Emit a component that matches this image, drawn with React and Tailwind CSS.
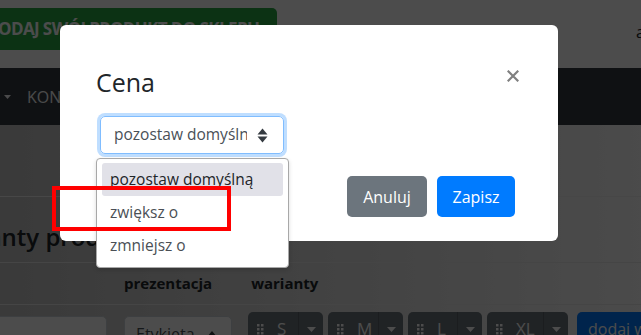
import React from "react";

function Grip() {
  return (
    <svg width="7" height="11" viewBox="0 0 7 11" className="shrink-0">
      <rect x="0" y="0" width="2.5" height="2.5" fill="#ffffff" />
      <rect x="4" y="0" width="2.5" height="2.5" fill="#ffffff" />
      <rect x="0" y="4" width="2.5" height="2.5" fill="#ffffff" />
      <rect x="4" y="4" width="2.5" height="2.5" fill="#ffffff" />
      <rect x="0" y="8" width="2.5" height="2.5" fill="#ffffff" />
      <rect x="4" y="8" width="2.5" height="2.5" fill="#ffffff" />
    </svg>
  );
}

function SizeGroup({ label, w }) {
  return (
    <div className="flex h-[34px] shrink-0 rounded-[5px] bg-[#6c757d] text-white" style={{ width: w }}>
      <div className="flex flex-1 items-center gap-[13px] pl-[9px] text-[17px]">
        <Grip />
        <span>{label}</span>
      </div>
      <div className="flex w-[25px] items-center justify-center border-l border-[#5a6268]">
        <svg width="9" height="5" viewBox="0 0 9 5"><path d="M0 0h9L4.5 5z" fill="#ffffff" /></svg>
      </div>
    </div>
  );
}

export default function App() {
  return (
    <div className="relative h-[335px] w-[641px] overflow-hidden bg-white font-['Open_Sans',sans-serif]">
      {/* page underneath */}
      <div className="flex flex-col">
        <header className="flex h-[68px] shrink-0 items-start justify-between bg-white pt-[8px]">
          <div className="-ml-[26px] flex h-[42px] w-[303px] shrink-0 items-center overflow-hidden whitespace-nowrap rounded-[5px] bg-[#28a745] pl-[12px] text-[17px] font-bold tracking-[-0.6px] text-white">
            DODAJ SWÓJ PRODUKT DO SKLEPU
          </div>
          <span className="mr-[-4px] mt-[12px] text-[16px] text-[#212529]">a</span>
        </header>
        <nav className="flex h-[57px] shrink-0 items-center gap-[16px] bg-[#343a40] pl-[4px] text-[16px] text-[#f8f9fa]">
          <svg width="7" height="4" viewBox="0 0 7 4"><path d="M0 0h7L3.5 4z" fill="#f8f9fa" /></svg>
          <span className="mt-[1px]">KONTAKT</span>
        </nav>
        <main className="flex h-[210px] shrink-0 flex-col bg-linear-to-r from-[#c2c2c2] to-[#fafafa]">
          <div className="h-[72px] shrink-0 border-b border-[#eeeeee]" />
          <div className="flex h-[66px] shrink-0 items-start border-b border-[#e6e6e6] pt-[25px]">
            <h2 className="-ml-[66px] shrink-0 whitespace-nowrap text-[24px] font-semibold leading-[29px] text-[#212529]">
              Warianty produktu
            </h2>
          </div>
          <div className="flex h-[42px] shrink-0 items-center border-b border-[#e6e6e6] text-[15px] font-bold text-[#212529]">
            <span className="ml-[124px] shrink-0">prezentacja</span>
            <span className="ml-[39px] shrink-0">warianty</span>
          </div>
          <div className="flex shrink-0 items-start pt-[7px]">
            <div className="-ml-[20px] mt-[4px] h-[36px] w-[127px] shrink-0 rounded-[5px] border border-[#ced4da] bg-white" />
            <div className="ml-[17px] mt-[4px] flex h-[36px] w-[108px] shrink-0 items-center justify-between rounded-[5px] border border-[#ced4da] bg-white pl-[11px] pr-[14px] text-[16px] text-[#495057]">
              <span>Etykieta</span>
              <svg width="10" height="6" viewBox="0 0 10 6"><path d="M0 6h10L5 0z" fill="#343a40" /></svg>
            </div>
            <div className="ml-[16px] flex shrink-0 gap-[5px]">
              <SizeGroup label="S" w={75} />
              <SizeGroup label="M" w={75} />
              <SizeGroup label="L" w={74} />
              <SizeGroup label="XL" w={81} />
            </div>
            <div className="ml-[9px] flex h-[34px] shrink-0 items-center whitespace-nowrap rounded-[5px] bg-[#007bff] pl-[11px] pr-[12px] text-[16px] text-white">
              dodaj wariant
            </div>
          </div>
        </main>
      </div>

      {/* modal backdrop + dialog */}
      <div className="absolute inset-0 bg-black/70 pl-[60px] pt-[25px]">
        <div className="relative h-[216px] w-[498px] rounded-[6px] bg-white px-[36px] pt-[42px]">
          <div className="flex h-[30px] items-start justify-between">
            <h5 className="text-[25px] leading-[30px] text-[#212529]">Cena</h5>
            <svg width="12" height="12" viewBox="0 0 12 12" className="mr-[3px] mt-[3px]">
              <path d="M1.5 1.5l9 9M10.5 1.5l-9 9" stroke="#808080" strokeWidth="2.2" strokeLinecap="square" />
            </svg>
          </div>
          <div className="mt-[19px] flex items-start justify-between">
            <div className="ml-[4px] flex h-[38px] w-[184px] items-center rounded-[5px] border border-[#80bdff] pl-[13px] pr-[15px] shadow-[0_0_0_3px_rgba(0,123,255,0.25)]">
              <span className="w-[133px] overflow-hidden whitespace-nowrap text-[15.5px] text-[#495057]">pozostaw domyślną</span>
              <svg width="11" height="15" viewBox="0 0 11 15" className="ml-auto">
                <path d="M5.5 0.5L10.5 6.5H0.5z" fill="#343a40" />
                <path d="M5.5 14.5L10.5 8.5H0.5z" fill="#343a40" />
              </svg>
            </div>
            <div className="mr-[7px] mt-[60px] flex gap-[10px]">
              <button className="h-[41px] w-[80px] rounded-[5px] bg-[#6c757d] text-[16px] text-white">Anuluj</button>
              <button className="h-[41px] w-[78px] rounded-[5px] bg-[#007bff] text-[16px] text-white">Zapisz</button>
            </div>
          </div>

          {/* open native select list */}
          <div className="absolute left-[36px] top-[133px] flex h-[110px] w-[193px] flex-col rounded-[4px] border border-[#a8a8a8] bg-white px-[5px] pt-[4px] text-[15.5px] shadow-[0_2px_4px_rgba(0,0,0,0.15)]">
            <div className="flex h-[33px] items-center rounded-[3px] bg-[#e1e1e8] px-[8px] text-[#212529]">pozostaw domyślną</div>
            <div className="flex h-[33px] items-center px-[8px] text-[#4a4f55]">zwiększ o</div>
            <div className="flex h-[33px] items-center px-[8px] text-[#4a4f55]">zmniejsz o</div>
          </div>
        </div>
      </div>

      {/* red annotation */}
      <div className="absolute left-[52px] top-[186px] h-[45px] w-[179px] border-[4px] border-[#ff0000]" />
    </div>
  );
}
